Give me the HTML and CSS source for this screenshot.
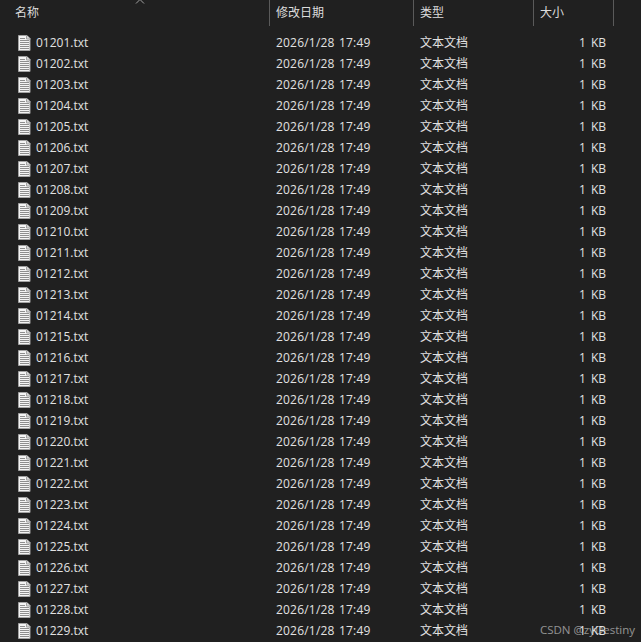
FILE: index.html
```html
<!DOCTYPE html>
<html lang="zh">
<head>
<meta charset="utf-8">
<title>Files</title>
<link rel="stylesheet" href="styles.css">
</head>
<body>
<div class="window">
  <svg class="sort" width="10" height="5" viewBox="0 0 10 5"><path d="M1 4.500 5 .5 9 4.500" fill="none" stroke="#a0a0a0"/></svg>
  <div class="head">
    <div class="hcell first">名称</div>
    <div class="hcell">修改日期</div>
    <div class="hcell">类型</div>
    <div class="hcell">大小</div>
  </div>
  <div id="list" class="list"></div>
  <div class="mark">CSDN @zyDestiny</div>
</div>
<script src="app.js"></script>
</body>
</html>
```
FILE: app.js
```js
var list = document.getElementById('list');
var icon = '<svg class="icon" width="13" height="16" viewBox="0 0 13 16"><path d="M.5.5h8.500l3 3v12h-11.500z" fill="#f4f4f4" stroke="#a2a2a2"/><path d="M8.500.5v3.500h4" fill="#d8d8d8" stroke="#a2a2a2"/><path d="M2 3.500h5M2 5.500h9M2 7.500h9M2 9.500h9M2 11.500h9M2 13.500h9" stroke="#8e8e8e"/></svg>';
var html = '';
for (var i = 1; i <= 29; i++) {
  var n = '012' + (i < 10 ? '0' : '') + i + '.txt';
  html += '<div class="row"><div class="name">' + icon + '<span>' + n + '</span></div>' +
    '<div class="cell date">2026/1/28 17:49</div><div class="cell">文本文档</div><div class="size">1 KB</div></div>';
}
list.innerHTML = html;
```
FILE: styles.css
```css
html, body { margin: 0; padding: 0; background: #202020; }
.window {
  position: relative;
  width: 641px;
  height: 642px;
  overflow: hidden;
  background: #202020;
  color: #e2e2e2;
  font: 12px/21px "Open Sans", "Noto Sans CJK SC", sans-serif;
}
.head, .row {
  display: grid;
  grid-template-columns: 270px 144px 120px 80px;
}
.head { height: 26px; }
.hcell {
  padding-left: 6px;
  border-right: 1px solid #5a5a5a;
  line-height: 26px;
  color: #dcdcdc;
}
.hcell.first { padding-left: 15px; }
.list { padding-top: 6px; }
.row { height: 21px; }
.name { display: flex; align-items: center; gap: 5px; padding-left: 18px; }
.icon { display: block; flex: none; }
.cell { padding-left: 6px; }
.date { letter-spacing: .2px; word-spacing: 1px; }
.size { text-align: right; padding-right: 8px; word-spacing: 2px; }
.sort { position: absolute; left: 135px; top: -1px; }
.mark {
  position: absolute;
  right: 6px;
  bottom: 4px;
  font-size: 11.5px;
  line-height: 16px;
  color: rgba(225,225,225,.6);
}
```
